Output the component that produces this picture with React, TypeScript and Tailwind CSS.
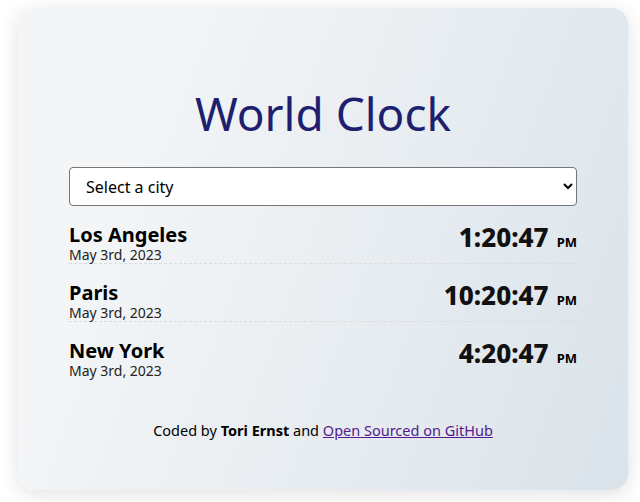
import React from 'react';

const CITIES = [
  { name: 'Los Angeles', date: 'May 3rd, 2023', time: '1:20:47' },
  { name: 'Paris', date: 'May 3rd, 2023', time: '10:20:47' },
  { name: 'New York', date: 'May 3rd, 2023', time: '4:20:47' },
];

const App: React.FC = () => {
  return (
    <div className="w-[640px] h-[502px] bg-white pt-2 pl-[18px] font-['Noto_Sans',sans-serif]">
      <div className="w-[610px] h-[482px] rounded-2xl shadow-[0_4px_20px_rgba(0,0,0,0.12)] bg-[linear-gradient(110deg,#f3f5f7_20%,#dae3ea_100%)] px-[51px] pt-[77px]">
        <h1 className="text-center text-[46px] leading-[56px] text-[#1f1f6f] font-normal">World Clock</h1>

        <select className="mt-[26px] w-full h-[39px] rounded border border-[#767676] bg-white px-3 text-base text-black">
          <option>Select a city</option>
        </select>

        <div>
          {CITIES.map((c, i) => (
            <CityRow key={c.name} {...c} last={i === CITIES.length - 1} />
          ))}
        </div>

        <p className="mt-[40px] text-center text-[14.5px] leading-[22px] text-black">
          Coded by <strong className="font-bold">Tori Ernst</strong> and{' '}
          <a href="#" className="underline text-[#551a8b]">Open Sourced on GitHub</a>
        </p>
      </div>
    </div>
  );
};

interface CityRowProps {
  name: string;
  date: string;
  time: string;
  last?: boolean;
}

const CityRow: React.FC<CityRowProps> = ({ name, date, time, last }) => (
  <div className={`flex justify-between items-start pt-[19px] ${last ? '' : 'border-b border-dashed border-[#d9dde0]'}`}>
    <div>
      <div className="text-xl font-bold leading-5 text-black">{name}</div>
      <div className="mt-[2px] text-sm leading-4 text-[#222]">{date}</div>
    </div>
    <div className="flex items-baseline gap-2 leading-[24px]">
      <span className="text-[26px] font-extrabold text-[#111]">{time}</span>
      <span className="text-[13px] font-bold">PM</span>
    </div>
  </div>
);

export default App;
